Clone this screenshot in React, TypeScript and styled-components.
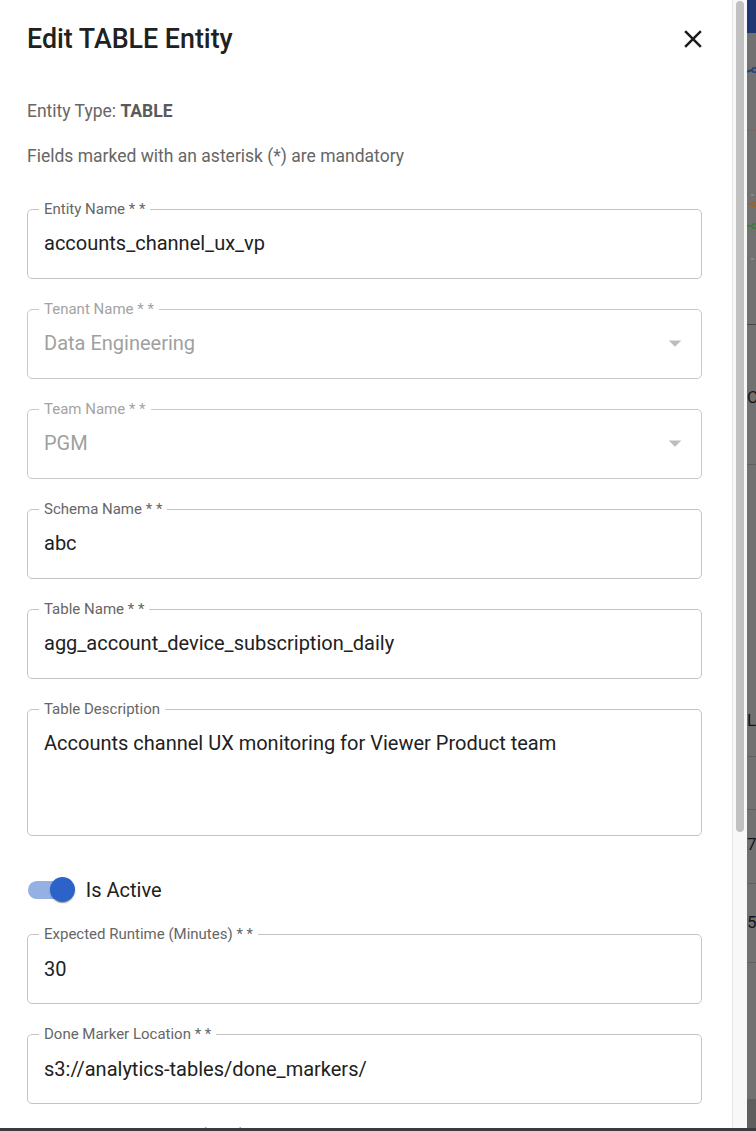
import React from "react";
import styled, { createGlobalStyle } from "styled-components";

const GlobalStyle = createGlobalStyle`
  html, body {
    margin: 0;
    padding: 0;
    height: 100%;
    overflow: hidden;
    background: #717171;
  }
  body {
    font-family: Roboto, "Liberation Sans", Arial, sans-serif;
  }
  *, *::before, *::after {
    box-sizing: border-box;
  }
`;

const Page = styled.div`
  display: flex;
  flex-direction: column;
  width: 756px;
  height: 1131px;
`;

const Main = styled.div`
  display: flex;
  flex: 1;
  min-height: 0;
  overflow: hidden;
`;

const BottomEdge = styled.div`
  height: 3px;
  flex-shrink: 0;
  background: #3b3b3b;
`;

const Drawer = styled.aside`
  width: 732px;
  flex-shrink: 0;
  background: #ffffff;
  overflow: hidden;
  padding: 19px 30px 0 27px;
  display: flex;
  flex-direction: column;
`;

const Header = styled.header`
  display: flex;
  align-items: center;
  justify-content: space-between;
  height: 40px;
  flex-shrink: 0;
`;

const Title = styled.h2`
  margin: 0;
  font-size: 26.8px;
  line-height: 40px;
  font-weight: 500;
  color: #212121;
`;

const CloseButton = styled.button`
  display: flex;
  align-items: center;
  justify-content: center;
  width: 30px;
  height: 30px;
  padding: 0;
  margin-right: -5.5px;
  border: 0;
  background: none;
  color: #1c1c1c;
  cursor: pointer;
`;

const Info = styled.p<{ $gap: number }>`
  margin: ${(p) => p.$gap}px 0 0;
  font-size: 17.5px;
  line-height: 25px;
  color: #666666;
  flex-shrink: 0;
`;

const Strong = styled.strong`
  font-weight: 700;
  color: #5a5a5a;
`;

const Form = styled.div`
  display: flex;
  flex-direction: column;
  gap: 23px;
  margin-top: 32.5px;
  flex-shrink: 0;
`;

const Field = styled.fieldset<{ $disabled?: boolean }>`
  margin: 0;
  padding: 0 11px;
  min-width: 0;
  border: 1px solid ${(p) => (p.$disabled ? "#c9c9c9" : "#c4c4c4")};
  border-radius: 5px;
`;

const Legend = styled.legend<{ $disabled?: boolean }>`
  padding: 0 5px;
  font-size: 15px;
  line-height: 15px;
  color: ${(p) => (p.$disabled ? "#a3a3a3" : "#666666")};
`;

const ValueRow = styled.div<{ $rows: number; $disabled?: boolean }>`
  display: flex;
  align-items: flex-start;
  justify-content: space-between;
  height: ${(p) => p.$rows * 28.75 + 32.25}px;
  padding: 12.5px 0 19.75px 5px;
  font-size: 20px;
  line-height: 28.75px;
  color: ${(p) => (p.$disabled ? "#a0a0a0" : "#212121")};
`;

const ArrowIcon = styled.svg`
  flex-shrink: 0;
  margin: -0.625px 0;
  fill: #bdbdbd;
`;

const SwitchRow = styled.label`
  display: flex;
  align-items: center;
  height: 47.5px;
  margin: 7px 0 -9.25px -13.75px;
  cursor: pointer;
`;

const SwitchRoot = styled.span`
  position: relative;
  display: inline-flex;
  flex-shrink: 0;
  width: 72.5px;
  height: 47.5px;
  padding: 15px;
`;

const SwitchTrack = styled.span`
  flex: 1;
  border-radius: 8.75px;
  background: #2b63c9;
  opacity: 0.5;
`;

const SwitchThumb = styled.span`
  position: absolute;
  top: 11.25px;
  left: 36.25px;
  width: 25px;
  height: 25px;
  border-radius: 50%;
  background: #2b63c9;
  box-shadow: 0 2px 1px -1px rgba(0, 0, 0, 0.2), 0 1px 1px 0 rgba(0, 0, 0, 0.14),
    0 1px 3px 0 rgba(0, 0, 0, 0.12);
`;

const SwitchLabel = styled.span`
  font-size: 20px;
  line-height: 30px;
  color: #212121;
`;

const ScrollTrack = styled.div`
  width: 15px;
  flex-shrink: 0;
  background: #f8f8f8;
  border-left: 1px solid #e6e6e6;
  padding: 1px 3px 0;
`;

const ScrollThumb = styled.div`
  height: 831px;
  border-radius: 4px;
  background: #c1c1c1;
`;

const Backdrop = styled.div`
  flex: 1;
  min-width: 0;
  display: flex;
  flex-direction: column;
  overflow: hidden;
  background: #717171;
`;

const AppBarShade = styled.div`
  height: 33px;
  flex-shrink: 0;
  background: #1e3772;
`;

const ChartShade = styled.svg`
  display: block;
  flex-shrink: 0;
`;

const StripRow = styled.div<{ $h: number; $pad: number; $dark?: boolean }>`
  height: ${(p) => p.$h}px;
  flex-shrink: 0;
  padding-top: ${(p) => p.$pad}px;
  border-bottom: 1px solid #5f5f5f;
  background: ${(p) => (p.$dark ? "#5e5e5e" : "#717171")};
  font-size: 17px;
  line-height: 20px;
  color: #141414;
  white-space: nowrap;
`;

type FieldDef = {
  label: string;
  value: string;
  disabled?: boolean;
  select?: boolean;
  rows?: number;
};

const topFields: FieldDef[] = [
  { label: "Entity Name * *", value: "accounts_channel_ux_vp" },
  { label: "Tenant Name * *", value: "Data Engineering", disabled: true, select: true },
  { label: "Team Name * *", value: "PGM", disabled: true, select: true },
  { label: "Schema Name * *", value: "abc" },
  { label: "Table Name * *", value: "agg_account_device_subscription_daily" },
  { label: "Table Description", value: "Accounts channel UX monitoring for Viewer Product team", rows: 3 },
];

const bottomFields: FieldDef[] = [
  { label: "Expected Runtime (Minutes) * *", value: "30" },
  { label: "Done Marker Location * *", value: "s3://analytics-tables/done_markers/" },
  { label: "Done Marker Lookback (Days) * *", value: "1" },
];

const stripRows = [
  { h: 140, pad: 62, text: "Cl" },
  { h: 292, pad: 245, text: "La" },
  { h: 53, pad: 0, text: "" },
  { h: 74, pad: 24, text: "7" },
  { h: 79, pad: 28, text: "5" },
  { h: 137, pad: 0, text: "" },
  { h: 60, pad: 0, text: "", dark: true },
];

function OutlinedField({ f }: { f: FieldDef }) {
  return (
    <Field $disabled={f.disabled}>
      <Legend $disabled={f.disabled}>{f.label}</Legend>
      <ValueRow $rows={f.rows ?? 1} $disabled={f.disabled}>
        <span>{f.value}</span>
        {f.select && (
          <ArrowIcon width="30" height="30" viewBox="0 0 24 24">
            <path d="M7 10l5 5 5-5z" />
          </ArrowIcon>
        )}
      </ValueRow>
    </Field>
  );
}

export default function App() {
  return (
    <>
      <GlobalStyle />
      <Page>
        <Main>
          <Drawer>
            <Header>
              <Title>Edit TABLE Entity</Title>
              <CloseButton aria-label="close">
                <svg width="30" height="30" viewBox="0 0 24 24" fill="currentColor">
                  <path d="M19 6.41 17.59 5 12 10.59 6.41 5 5 6.41 10.59 12 5 17.59 6.41 19 12 13.41 17.59 19 19 17.59 13.41 12z" />
                </svg>
              </CloseButton>
            </Header>
            <Info $gap={40}>
              Entity Type: <Strong>TABLE</Strong>
            </Info>
            <Info $gap={20}>Fields marked with an asterisk (*) are mandatory</Info>
            <Form>
              {topFields.map((f) => (
                <OutlinedField key={f.label} f={f} />
              ))}
              <SwitchRow>
                <SwitchRoot>
                  <SwitchTrack />
                  <SwitchThumb />
                </SwitchRoot>
                <SwitchLabel>Is Active</SwitchLabel>
              </SwitchRow>
              {bottomFields.map((f) => (
                <OutlinedField key={f.label} f={f} />
              ))}
            </Form>
          </Drawer>
          <ScrollTrack>
            <ScrollThumb />
          </ScrollTrack>
          <Backdrop>
            <AppBarShade />
            <ChartShade width="9" height="292" viewBox="0 0 9 292">
              <path d="M0 38.5 Q3 38 5 37" stroke="#23427f" strokeWidth="2" fill="none" />
              <circle cx="7.5" cy="37" r="2.3" stroke="#23427f" strokeWidth="1.6" fill="none" />
              <line x1="0" y1="97" x2="9" y2="97" stroke="#8e5555" strokeWidth="1" strokeDasharray="2 2" />
              <line x1="4" y1="162" x2="7" y2="162" stroke="#9a9a9a" strokeWidth="1" />
              <path d="M0 171 L5 171" stroke="#9a6328" strokeWidth="2" fill="none" />
              <circle cx="7.5" cy="171" r="2.3" stroke="#9a6328" strokeWidth="1.6" fill="none" />
              <path d="M0 193 L5 193" stroke="#3d7a3d" strokeWidth="2" fill="none" />
              <circle cx="7.5" cy="193" r="2.3" stroke="#3d7a3d" strokeWidth="1.6" fill="none" />
              <line x1="4" y1="226" x2="7" y2="226" stroke="#9a9a9a" strokeWidth="1" />
              <line x1="0" y1="291.5" x2="9" y2="291.5" stroke="#474747" strokeWidth="1" />
            </ChartShade>
            {stripRows.map((r, i) => (
              <StripRow key={i} $h={r.h} $pad={r.pad} $dark={r.dark}>
                {r.text}
              </StripRow>
            ))}
          </Backdrop>
        </Main>
        <BottomEdge />
      </Page>
    </>
  );
}
